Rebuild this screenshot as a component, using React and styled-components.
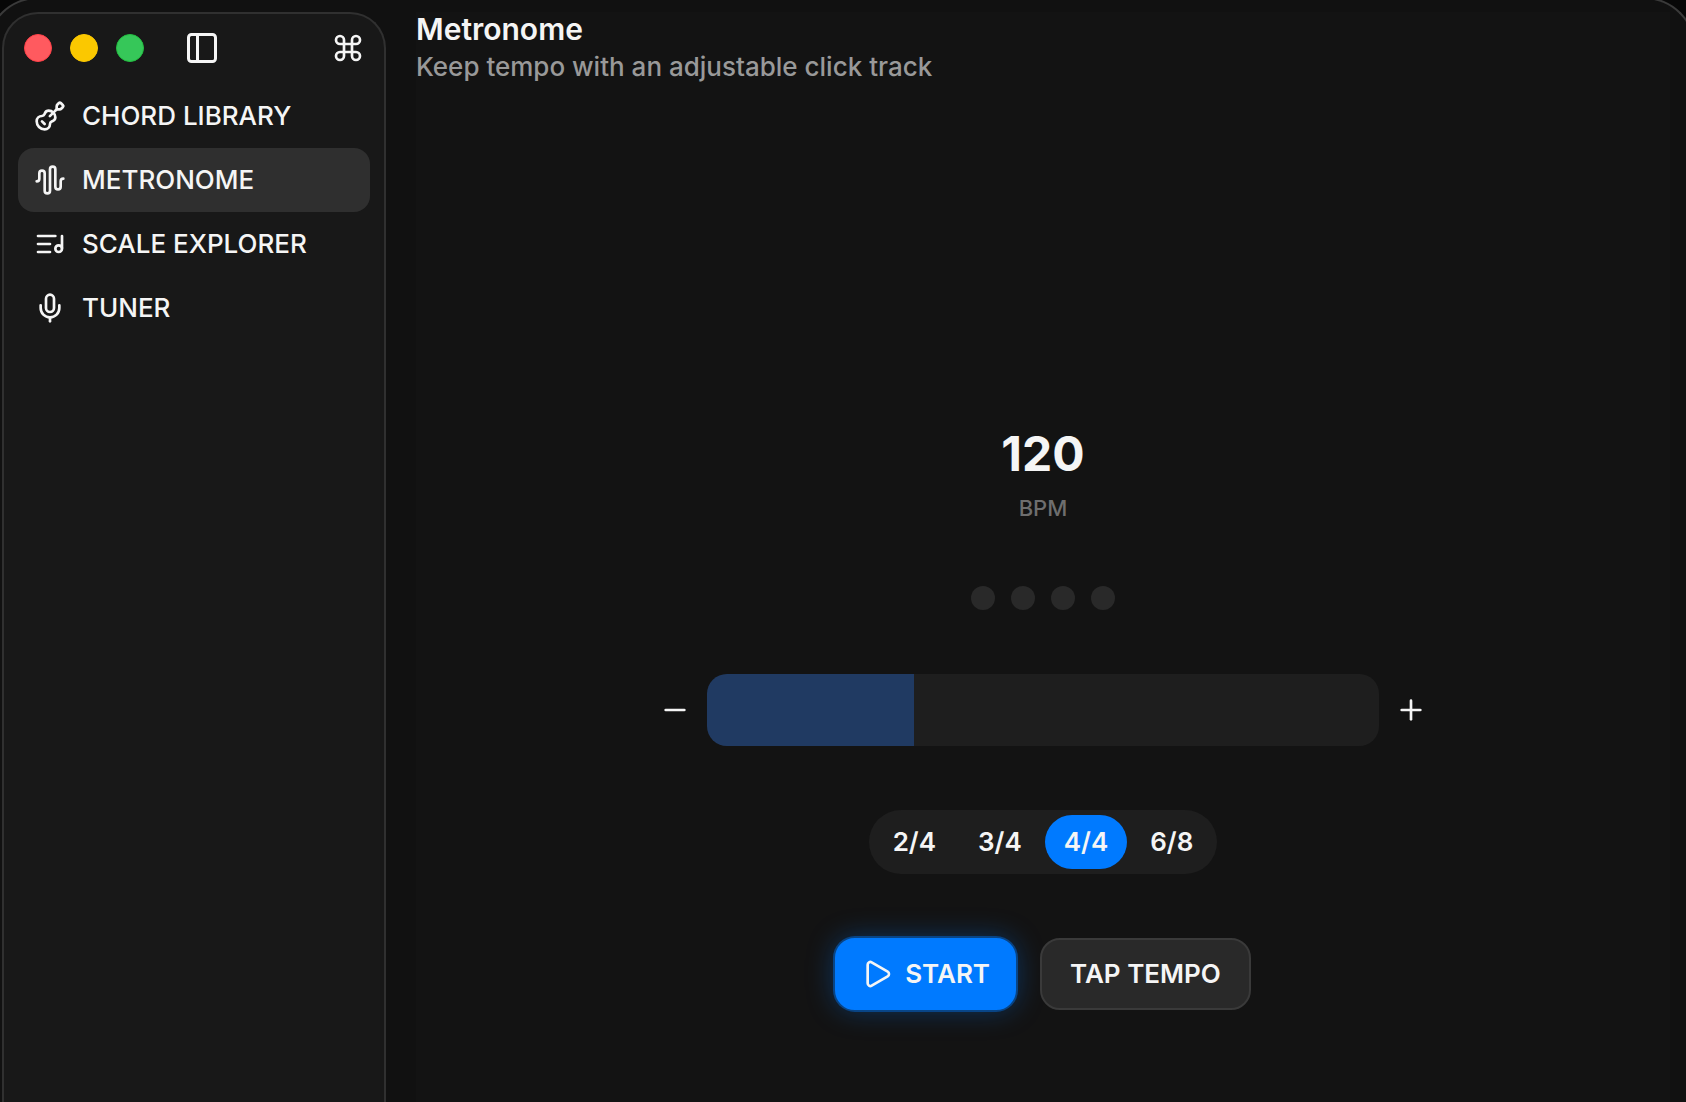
import React, { useState } from 'react';
import styled, { createGlobalStyle } from 'styled-components';
import {
  AudioWaveform,
  Command,
  Guitar,
  Mic,
  Minus,
  PanelLeft,
  Play,
  Plus,
} from 'lucide-react';

const MIN_BPM = 40;
const MAX_BPM = 300;

const GlobalStyle = createGlobalStyle`
  *, *::before, *::after { box-sizing: border-box; }
  body {
    margin: 0;
    overflow: hidden;
    background: #070707;
    color: #f5f5f5;
    font-family: Inter, "Liberation Sans", sans-serif;
    font-size: 26px;
    line-height: 32px;
    -webkit-font-smoothing: antialiased;
  }
  button, input {
    margin: 0;
    font: inherit;
    color: inherit;
  }
  button { cursor: pointer; }
`;

/* The window frame bleeds a little past the edges of the viewport. */
const Window = styled.div`
  display: flex;
  gap: 30px;
  height: calc(100vh + 3px);
  margin: -3px -10px 0 -14px;
  padding: 13px 24px 0 14px;
  border: 2px solid #3a3a3a;
  border-bottom: 0;
  border-radius: 52px 52px 0 0;
  background: #111111;
`;

const Sidebar = styled.aside`
  flex: 0 0 384px;
  padding: 14px;
  border: 2px solid #303030;
  border-bottom: 0;
  border-radius: 36px 36px 0 0;
  background: #181818;
`;

const TitleBar = styled.div`
  display: flex;
  align-items: center;
  height: 40px;
  padding: 0 6px;
`;

const TrafficLights = styled.div`
  display: flex;
  gap: 18px;
  margin-right: 40px;
`;

const Light = styled.button`
  width: 28px;
  height: 28px;
  padding: 0;
  border: 1px solid ${(p) => p.$edge};
  border-radius: 50%;
  background: ${(p) => p.$color};
`;

const IconButton = styled.button`
  display: grid;
  place-items: center;
  padding: 0;
  border: 0;
  background: none;
`;

const ShortcutsButton = styled(IconButton)`
  margin-left: auto;
`;

const Nav = styled.nav`
  display: flex;
  flex-direction: column;
  margin-top: 16px;
`;

const NavItem = styled.a`
  display: flex;
  align-items: center;
  gap: 16px;
  height: 64px;
  padding: 0 16px;
  border-radius: 16px;
  background: ${(p) => (p.$active ? '#2f2f2f' : 'transparent')};
  color: inherit;
  font-weight: 500;
  text-decoration: none;
  text-transform: uppercase;
`;

const Main = styled.main`
  flex: 1;
  min-width: 0;
  background: #131313;
`;

const Title = styled.h1`
  margin: 0;
  font-size: 30px;
  font-weight: 600;
  line-height: 34px;
`;

const Subtitle = styled.p`
  margin: 4px 0 0;
  color: #999999;
  font-weight: 500;
  line-height: 34px;
`;

const Metronome = styled.section`
  display: flex;
  flex-direction: column;
  align-items: center;
  gap: 64px;
  padding-top: 338px;
`;

const Tempo = styled.div`
  text-align: center;
`;

const TempoValue = styled.output`
  display: block;
  font-size: 48px;
  font-weight: 700;
  line-height: 64px;
`;

const TempoUnit = styled.div`
  margin-top: 8px;
  color: #6e6e6e;
  font-size: 22px;
  font-weight: 500;
  line-height: 28px;
`;

const Beats = styled.div`
  display: flex;
  gap: 16px;
`;

const Beat = styled.span`
  width: 24px;
  height: 24px;
  border-radius: 50%;
  background: #292929;
`;

const TempoControl = styled.div`
  display: flex;
  align-items: center;
  gap: 16px;
  width: 100%;
  max-width: 768px;
`;

const Slider = styled.input`
  flex: 1;
  min-width: 0;
  height: 72px;
  appearance: none;
  border-radius: 20px;
  outline: none;
  cursor: ew-resize;

  &::-webkit-slider-thumb {
    appearance: none;
    width: 1px;
    height: 72px;
    background: transparent;
  }
`;

const Meters = styled.fieldset`
  display: flex;
  gap: 4px;
  margin: 0;
  padding: 5px;
  border: 0;
  border-radius: 32px;
  background: #1e1e1e;
`;

const Meter = styled.label`
  position: relative;
  padding: 11px 19px;
  border-radius: 27px;
  background: ${(p) => (p.$active ? '#007aff' : 'transparent')};
  font-weight: 600;
  cursor: pointer;
`;

const MeterInput = styled.input`
  position: absolute;
  inset: 0;
  opacity: 0;
  cursor: pointer;
`;

const Actions = styled.div`
  display: flex;
  gap: 24px;
`;

const Action = styled.button`
  display: flex;
  align-items: center;
  gap: 12px;
  height: 72px;
  padding: 0 ${(p) => (p.$primary ? 24 : 28)}px;
  border: 2px solid ${(p) => (p.$primary ? '#007aff' : '#3a3a3a')};
  border-radius: 20px;
  background: ${(p) => (p.$primary ? '#007aff' : '#292929')};
  box-shadow: ${(p) =>
    p.$primary
      ? '0 0 0 2px rgba(0, 122, 255, 0.4), 0 0 28px rgba(0, 122, 255, 0.35)'
      : 'none'};
  font-weight: 600;
`;

function ScaleIcon({ size = 24 }) {
  return (
    <svg
      width={size}
      height={size}
      viewBox="0 0 24 24"
      fill="none"
      stroke="currentColor"
      strokeWidth="2"
      strokeLinecap="round"
      strokeLinejoin="round"
      aria-hidden="true"
    >
      <path d="M21 15V6" />
      <circle cx="18.5" cy="15.5" r="2.5" />
      <path d="M12 12H3" />
      <path d="M16 6H3" />
      <path d="M12 18H3" />
    </svg>
  );
}

const sections = [
  { label: 'Chord Library', icon: Guitar },
  { label: 'Metronome', icon: AudioWaveform },
  { label: 'Scale Explorer', icon: ScaleIcon },
  { label: 'Tuner', icon: Mic },
];

const meters = ['2/4', '3/4', '4/4', '6/8'];

export default function App() {
  const [bpm, setBpm] = useState(120);
  const [meter, setMeter] = useState('4/4');
  const filled = ((bpm - MIN_BPM) / (MAX_BPM - MIN_BPM)) * 100;
  const beats = Number(meter.split('/')[0]);
  const step = (by) => setBpm((v) => Math.min(MAX_BPM, Math.max(MIN_BPM, v + by)));

  return (
    <>
      <GlobalStyle />
      <Window>
        <Sidebar>
          <TitleBar>
            <TrafficLights>
              <Light $color="#ff5a5f" $edge="#ff4048" aria-label="Close" />
              <Light $color="#fbc800" $edge="#fbc800" aria-label="Minimize" />
              <Light $color="#36c759" $edge="#22c040" aria-label="Zoom" />
            </TrafficLights>
            <IconButton aria-label="Toggle sidebar">
              <PanelLeft size={36} />
            </IconButton>
            <ShortcutsButton aria-label="Shortcuts">
              <Command size={32} />
            </ShortcutsButton>
          </TitleBar>
          <Nav>
            {sections.map(({ label, icon: Icon }) => (
              <NavItem key={label} href="#" $active={label === 'Metronome'}>
                <Icon size={32} />
                {label}
              </NavItem>
            ))}
          </Nav>
        </Sidebar>
        <Main>
          <header>
            <Title>Metronome</Title>
            <Subtitle>Keep tempo with an adjustable click track</Subtitle>
          </header>
          <Metronome>
            <Tempo>
              <TempoValue htmlFor="tempo">{bpm}</TempoValue>
              <TempoUnit>BPM</TempoUnit>
            </Tempo>
            <Beats>
              {Array.from({ length: beats }, (_, i) => (
                <Beat key={i} />
              ))}
            </Beats>
            <TempoControl>
              <IconButton aria-label="Slower" onClick={() => step(-1)}>
                <Minus size={32} />
              </IconButton>
              <Slider
                id="tempo"
                type="range"
                aria-label="Tempo"
                min={MIN_BPM}
                max={MAX_BPM}
                value={bpm}
                onChange={(e) => setBpm(Number(e.target.value))}
                style={{
                  background: `linear-gradient(to right, #203a62 ${filled}%, #1e1e1e ${filled}%)`,
                }}
              />
              <IconButton aria-label="Faster" onClick={() => step(1)}>
                <Plus size={32} />
              </IconButton>
            </TempoControl>
            <Meters aria-label="Time signature">
              {meters.map((m) => (
                <Meter key={m} $active={m === meter}>
                  <MeterInput
                    type="radio"
                    name="meter"
                    value={m}
                    checked={m === meter}
                    onChange={() => setMeter(m)}
                  />
                  {m}
                </Meter>
              ))}
            </Meters>
            <Actions>
              <Action $primary>
                <Play size={32} />
                START
              </Action>
              <Action>TAP TEMPO</Action>
            </Actions>
          </Metronome>
        </Main>
      </Window>
    </>
  );
}
